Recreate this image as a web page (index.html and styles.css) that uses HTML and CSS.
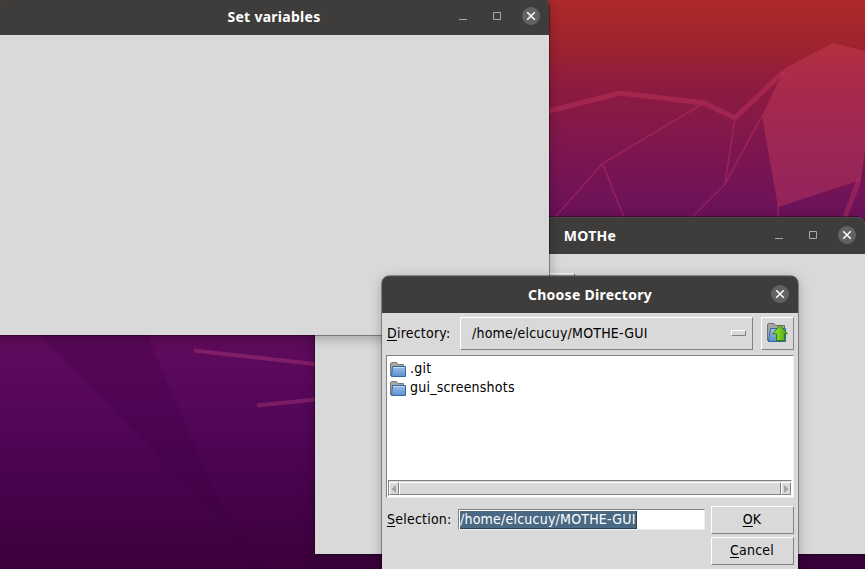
FILE: index.html
```
<!DOCTYPE html>
<html lang="en">
<head>
<meta charset="utf-8">
<title>Choose Directory</title>
<link rel="stylesheet" href="styles.css">
</head>
<body>
<main class="desktop">
  <svg class="wallpaper" width="865" height="569" viewBox="0 0 865 569" aria-hidden="true">
    <path class="facet-dark" d="M35 330L145 330L231 530ZM231 530L238 530L268 569L252 569Z"/>
    <path class="facet" d="M785 68L833 43L865 51V150L861 180L778 207L762 116L779 80Z"/>
    <g class="ridge">
      <path class="thick" d="M545 112L620 93L704 103L735 118L784 71"/>
      <path class="thick" d="M859 180L844 220"/>
      <path d="M704 103L602.500 163.500L550 223M602.500 163.500L625 220M735 118L725 184L687 222M725 184L762 116M778 205V220"/>
    </g>
    <path class="streak" d="M194 350.500L320 364.500M257 405.500L320 399"/>
  </svg>

  <section class="window mothe">
    <header class="titlebar">
      <h2 class="title">MOTHe</h2>
      <div class="controls">
        <svg class="glyph" width="10" height="10"><path d="M1 8.500H9"/></svg>
        <svg class="glyph" width="10" height="10"><path d="M1.500 1.500H8.500V8.500H1.500Z"/></svg>
        <span class="close"><svg width="18" height="18"><path d="M5.200 5.200L12.800 12.800M12.800 5.200L5.200 12.800"/></svg></span>
      </div>
    </header>
    <div class="client"><div class="hidden-button raised"></div></div>
  </section>

  <section class="window variables">
    <header class="titlebar">
      <h2 class="title">Set variables</h2>
      <div class="controls">
        <svg class="glyph" width="10" height="10"><path d="M1 8.500H9"/></svg>
        <svg class="glyph" width="10" height="10"><path d="M1.500 1.500H8.500V8.500H1.500Z"/></svg>
        <span class="close"><svg width="18" height="18"><path d="M5.200 5.200L12.800 12.800M12.800 5.200L5.200 12.800"/></svg></span>
      </div>
    </header>
  </section>

  <section class="window dialog">
    <header class="titlebar">
      <h2 class="title">Choose Directory</h2>
      <div class="controls">
        <span class="close"><svg width="18" height="18"><path d="M5.200 5.200L12.800 12.800M12.800 5.200L5.200 12.800"/></svg></span>
      </div>
    </header>
    <div class="form">
      <div class="directory-row">
        <span class="label"><u>D</u>irectory:</span>
        <div class="select raised"><span>/home/elcucuy/MOTHE-GUI</span><i class="indicator"></i></div>
        <div class="up raised">
          <svg width="22" height="20" viewBox="0 0 22 20">
            <defs>
              <linearGradient id="blue" x2="0" y2="1"><stop stop-color="#9dbfe6"/><stop offset="1" stop-color="#5d8fce"/></linearGradient>
              <linearGradient id="green" x2="1"><stop stop-color="#a5e63c"/><stop offset="1" stop-color="#4aa50d"/></linearGradient>
            </defs>
            <path d="M1.500 17.500V1.500L2.500.500H8L9.500 2.500H18.500V17.500Z" fill="#a5a7a3" stroke="#6e706c"/>
            <path d="M4.500 5.500H19.500V18.500H2.500Z" fill="url(#blue)" stroke="#3465a4"/>
            <path d="M14 2.200L21.300 10.800H18.500V17.500H10.500V10.800H6.700Z" fill="url(#green)" stroke="#348005"/>
          </svg>
        </div>
      </div>

      <div class="list">
        <ul class="files">
          <li><svg width="17" height="16"><path d="M.500 13.500V1.500L1.500.500H6.500L8 2.500H13.500V13.500Z" fill="#a5a7a3" stroke="#777975"/><path d="M2.500 4.500H15.500V14.500H1.500Z" fill="url(#blue)" stroke="#3465a4"/><path d="M3.500 5.500H14.500" stroke="#c4d9f0"/></svg><span>.git</span></li>
          <li><svg width="17" height="16"><path d="M.500 13.500V1.500L1.500.500H6.500L8 2.500H13.500V13.500Z" fill="#a5a7a3" stroke="#777975"/><path d="M2.500 4.500H15.500V14.500H1.500Z" fill="url(#blue)" stroke="#3465a4"/><path d="M3.500 5.500H14.500" stroke="#c4d9f0"/></svg><span>gui_screenshots</span></li>
        </ul>
        <div class="scrollbar">
          <span class="arrow raised"><svg width="8" height="10"><path d="M6 1V9L1.500 5Z"/></svg></span>
          <span class="thumb raised"></span>
          <span class="arrow raised"><svg width="8" height="10"><path d="M2 1V9L6.500 5Z"/></svg></span>
        </div>
      </div>

      <div class="selection-row">
        <span class="label"><u>S</u>election:</span>
        <div class="entry"><span class="selected">/home/elcucuy/MOTHE-GUI</span></div>
        <div class="buttons">
          <div class="button raised"><span><u>O</u>K</span></div>
          <div class="button raised"><span><u>C</u>ancel</span></div>
        </div>
      </div>
    </div>
  </section>
</main>
</body>
</html>
```
FILE: styles.css
```
* { box-sizing: border-box; }
body { margin: 0; overflow: hidden; }

.desktop {
  position: relative;
  width: 865px;
  height: 569px;
  overflow: hidden;
  background: linear-gradient(#ad2928 0, #a0242f 40px, #8d1b40 90px, #7d164f 150px, #6d1259 208px, #600b5c 335px, #56075a 400px, #48034d 480px, #3b013c 569px);
  font: 14px/18px "DejaVu Sans Condensed", "DejaVu Sans", sans-serif;
  font-stretch: condensed;
  letter-spacing: .22px;
  color: #000;
}
.wallpaper { display: block; }
.facet { fill: #df4964; opacity: .33; }
.facet-dark { fill: #39003f; opacity: .24; }
.ridge { fill: none; stroke: #d93d68; stroke-width: 1.600; opacity: .33; }
.ridge .thick { stroke-width: 5; }
.streak { fill: none; stroke: #a33171; stroke-width: 4; opacity: .5; }

.window {
  position: absolute;
  background: #d9d9d9;
  box-shadow: 0 0 0 1px rgba(0,0,0,.32), 0 3px 12px 1px rgba(0,0,0,.25);
}
.mothe { left: 315px; top: 217px; width: 550px; height: 337px; border-radius: 8px 8px 0 0; }
.variables { left: -1px; top: -2px; width: 550px; height: 337px; border-radius: 8px 8px 0 0; }
.dialog { left: 382px; top: 276px; width: 416px; height: 310px; border-radius: 8px 8px 0 0; }

.titlebar {
  display: grid;
  grid-template-columns: 1fr auto 1fr;
  align-items: center;
  height: 37px;
  padding: 0 9px 1px 0;
  background: #3e3d3b;
  box-shadow: inset 0 1px #4a4947;
  border-radius: 7px 7px 0 0;
}
.title {
  grid-column: 2;
  margin: 1px -9px 0 0;
  font: 700 14px/20px "Noto Sans", "Open Sans", sans-serif;
  letter-spacing: .28px;
  color: #fff;
}
.controls {
  grid-column: 3;
  justify-self: end;
  display: flex;
  align-items: center;
  gap: 24px;
}
.controls .glyph + .close { margin-left: -4px; }
.glyph { fill: none; stroke: #aaa9a7; }
.close { display: flex; width: 18px; height: 18px; border-radius: 50%; background: #626262; }
.close svg { fill: none; stroke: #fff; stroke-width: 1.500; }

.raised {
  border: 1px solid;
  border-color: #fff #828282 #828282 #fff;
  background: #d9d9d9;
}
.client { padding: 19px 0 0 200px; }
.hidden-button { width: 60px; height: 30px; }

.form { padding: 4px 4px 0; }
.directory-row { display: flex; align-items: center; height: 33px; }
.label { width: 73px; padding-left: 1px; white-space: nowrap; }
.directory-row .label { padding-bottom: 2px; }
u { text-underline-offset: 2px; text-decoration-thickness: 1px; text-decoration-skip-ink: none; }
.select {
  display: flex;
  align-items: center;
  justify-content: space-between;
  width: 293px;
  height: 33px;
  margin-left: 1px;
  padding: 0 6px 1px 11px;
}
.select span { padding-bottom: 1px; }
.indicator { width: 15px; height: 6px; border: 1px solid; border-color: #fff #828282 #828282 #fff; }
.up { display: grid; place-items: center; width: 33px; height: 33px; margin-left: 8px; padding: 0 1px 2px 0; }

.list {
  display: flex;
  flex-direction: column;
  justify-content: space-between;
  height: 143px;
  margin-top: 5px;
  padding: 3px 1px 1px;
  background: #fff;
  border: 1px solid;
  border-color: #828282 #eee #eee #828282;
}
.files { margin: 0; padding: 0 2px; list-style: none; }
.files li { display: flex; align-items: center; height: 19px; gap: 3px; }
.files li svg { margin-top: 3px; }
.files span { padding-bottom: 1px; }
.scrollbar {
  display: flex;
  height: 16px;
  padding: 1px 0 0;
  background: #d9d9d9;
  border: 1px solid;
  border-color: #828282 #fff #fff #828282;
}
.arrow { display: grid; place-items: center; width: 10px; flex: none; }
.arrow svg { fill: #a3a3a3; }
.thumb { flex: 1; }

.selection-row { display: flex; height: 60px; margin-top: 8px; }
.selection-row .label { width: 72px; padding-top: 4px; }
.entry {
  width: 247px;
  height: 21px;
  margin-top: 3px;
  padding: 1px 0 0 1px;
  background: #fff;
  border: 1px solid;
  border-color: #828282 #eee #eee #828282;
}
.selected { display: block; width: max-content; height: 18px; line-height: 17px; color: #fff; background: #4a6984; border: solid #2c4254; border-width: 0 1px 1px 0; }
.buttons { display: flex; flex-direction: column; gap: 3px; margin-left: 6px; }
.button { display: grid; place-items: center; width: 83px; height: 28px; padding: 0 1px 3px 0; }
```
